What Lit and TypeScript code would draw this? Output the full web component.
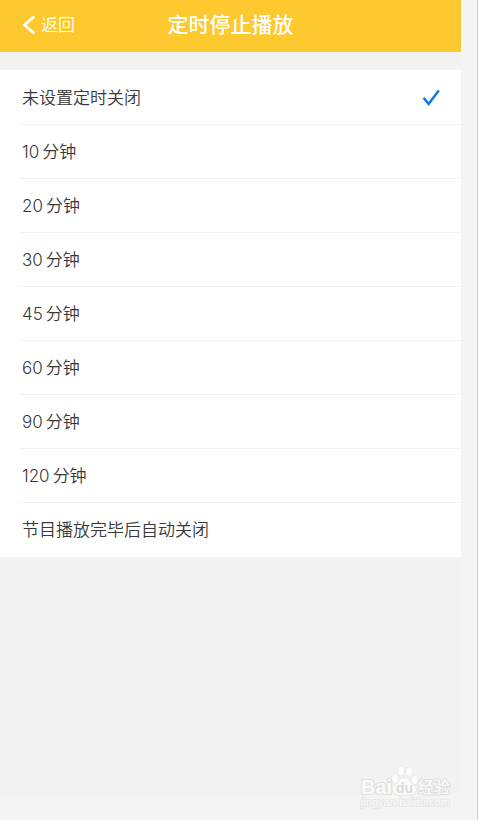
import { LitElement, html, css } from "lit";
import { customElement, state } from "lit/decorators.js";

interface TimerOption {
  id: string;
  amount?: string;
  label: string;
}

const OPTIONS: TimerOption[] = [
  { id: "off", label: "未设置定时关闭" },
  ...["10", "20", "30", "45", "60", "90", "120"].map((n) => ({
    id: n,
    amount: n,
    label: "分钟",
  })),
  { id: "end", label: "节目播放完毕后自动关闭" },
];

@customElement("nav-header")
class NavHeader extends LitElement {
  static styles = css`
    :host {
      display: block;
    }
    .bar {
      display: grid;
      grid-template-columns: 1fr auto 1fr;
      align-items: center;
      height: 52px;
      box-sizing: border-box;
      padding: 0 22px 1px;
      background: #fec82f;
      border-bottom: 1px solid #d2c7ab;
      color: #fff;
    }
    .back {
      display: flex;
      align-items: center;
      justify-self: start;
      gap: 6px;
      padding: 0;
      border: 0;
      background: none;
      color: inherit;
      font: inherit;
      font-size: 17px;
      font-weight: 350;
      line-height: 24px;
      cursor: pointer;
    }
    .chevron {
      display: block;
      width: 13px;
      height: 20px;
    }
    .title {
      margin: 0;
      font-size: 21px;
      line-height: 30px;
      font-weight: 500;
    }
  `;

  render() {
    return html`
      <header class="bar">
        <button class="back" type="button">
          <svg class="chevron" viewBox="0 0 13 20" fill="none" stroke="#fff" stroke-width="2.6" aria-hidden="true">
            <path d="M12.200 1.600 2.400 10 12.200 18.400" />
          </svg>
          返回
        </button>
        <h1 class="title">定时停止播放</h1>
      </header>
    `;
  }
}

@customElement("site-mark")
class SiteMark extends LitElement {
  static styles = css`
    :host {
      display: block;
    }
    .logo {
      display: block;
      width: 92px;
      height: 46px;
      font-family: "Liberation Sans", "Noto Sans CJK SC", sans-serif;
      paint-order: stroke fill;
      stroke-linejoin: round;
    }
    .latin {
      font-size: 20px;
      font-weight: 700;
    }
    .du {
      font-size: 14px;
      font-weight: 700;
      fill: #dadada;
      stroke: none;
    }
    .cjk {
      font-size: 16px;
      font-weight: 500;
    }
    .site {
      font-size: 11px;
      fill: #fafafa;
      stroke: #e8e8e8;
    }
  `;

  render() {
    return html`
      <svg class="logo" viewBox="0 0 92 46" fill="#fbfbfb" stroke="#dedede" stroke-width="2">
        <text class="latin" x="1" y="30">Bai</text>
        <g stroke-width="1.2">
          <ellipse cx="35.400" cy="14.400" rx="3.200" ry="4.200" transform="rotate(-14 35.400 14.400)" />
          <ellipse cx="41" cy="7.200" rx="3.400" ry="4.600" />
          <ellipse cx="49.200" cy="7.600" rx="3.400" ry="4.600" transform="rotate(10 49.200 7.600)" />
          <ellipse cx="54.600" cy="16" rx="3.200" ry="4.400" transform="rotate(14 54.600 16)" />
          <path d="M44.600 13.800c3.400 0 4.800 3 6.800 5s5 3.400 4.600 7c-.4 3.400-2.600 5-5.400 5H38.400c-3.400 0-5.400-2.200-5.400-5.200 0-3.200 2.600-4.600 4.400-6.600s3.800-5.200 7.200-5.200z" />
        </g>
        <text class="du" x="44.500" y="29" text-anchor="middle">du</text>
        <text class="cjk" x="58" y="29">经验</text>
        <text class="site" x="1" y="42">jingyan.baidu.com</text>
      </svg>
    `;
  }
}

@customElement("app-root")
class AppRoot extends LitElement {
  @state() private selected = "off";

  static styles = css`
    :host {
      display: flex;
      flex-direction: column;
      position: relative;
      box-sizing: border-box;
      min-height: 100vh;
      padding: 0 16px 26px 0;
      border-right: 1px solid #cfcfcf;
      background: #f4f4f4;
      font-family: Inter, "Noto Sans CJK SC", sans-serif;
    }
    .screen {
      flex: 1;
      background: #f2f2f2;
    }
    .list {
      margin: 18px 0 0;
      padding: 1px 0 0;
      border: 0;
      background: #fff;
      color: #383838;
    }
    .row {
      display: flex;
      align-items: center;
      margin-left: 20px;
      padding: 0 21px 0 2px;
      height: 53px;
      border-bottom: 1px solid #f3f3f3;
      font-size: 17px;
      font-weight: 350;
      line-height: 26px;
      cursor: pointer;
    }
    .row:last-child {
      border-bottom-color: transparent;
    }
    .text {
      display: flex;
      flex: 1;
      gap: 3px;
    }
    .radio {
      appearance: none;
      width: 0;
      height: 0;
      margin: 0;
      order: 1;
    }
    .tick {
      display: none;
      order: 2;
      width: 18px;
      height: 18px;
    }
    .radio:checked + .tick {
      display: block;
    }
    .mark {
      position: absolute;
      right: 25px;
      bottom: 10px;
    }
  `;

  render() {
    return html`
      <main class="screen">
        <nav-header></nav-header>
        <fieldset class="list" aria-label="定时停止播放">
          ${OPTIONS.map(
            (o) => html`
              <label class="row">
                <input
                  class="radio"
                  type="radio"
                  name="timer"
                  .checked=${this.selected === o.id}
                  @change=${() => (this.selected = o.id)}
                />
                <svg class="tick" viewBox="0 0 18 18" fill="none" stroke="#0b74e5" stroke-width="2.4" aria-hidden="true">
                  <path d="M1.600 8.800 6.600 15 16.800 1.600" />
                </svg>
                <span class="text">
                  ${o.amount ? html`<span>${o.amount}</span>` : null}
                  <span>${o.label}</span>
                </span>
              </label>
            `
          )}
        </fieldset>
      </main>
      <site-mark class="mark"></site-mark>
    `;
  }
}
